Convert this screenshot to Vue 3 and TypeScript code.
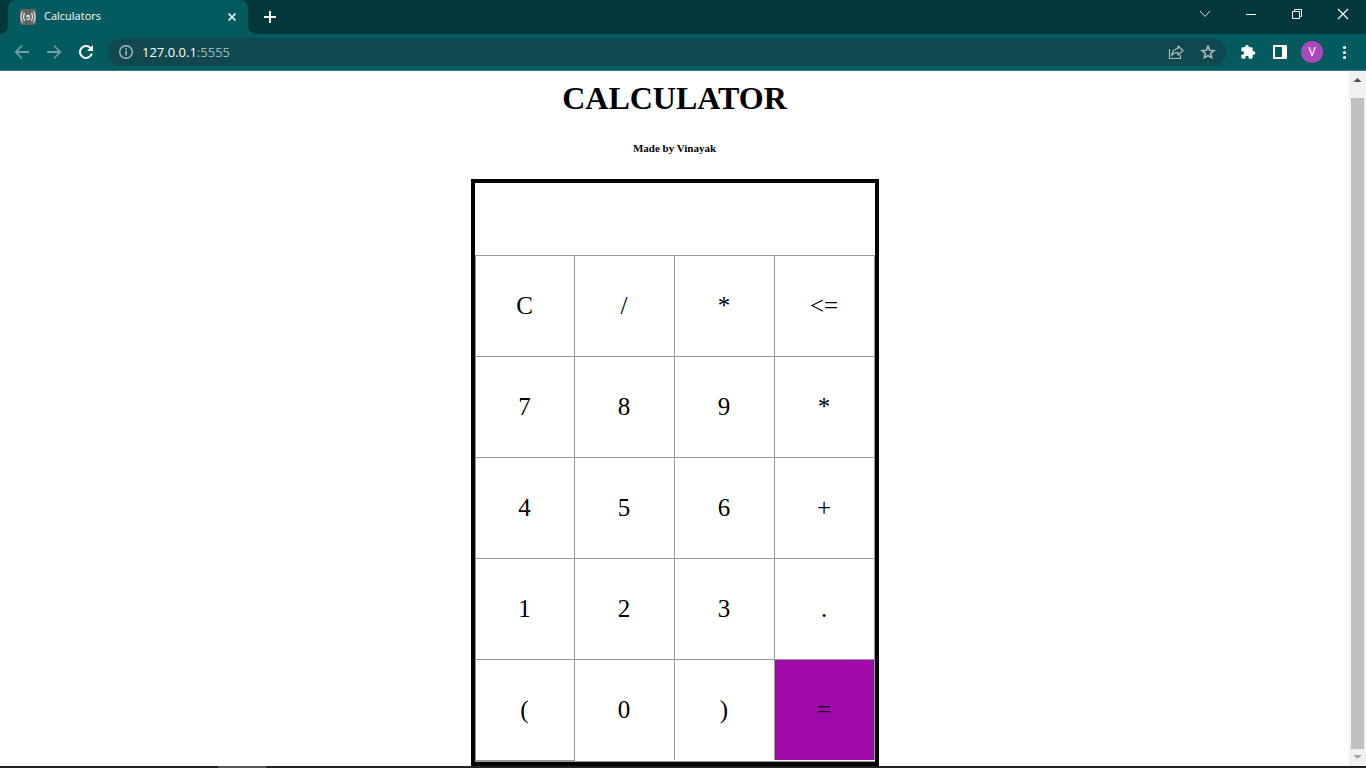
<script setup lang="ts">
import { ref } from 'vue'

interface Key {
  id: string
  label: string
  kind?: 'equals' | 'open'
}

const keys: Key[] = [
  { id: 'clear', label: 'C' },
  { id: 'divide', label: '/' },
  { id: 'times', label: '*' },
  { id: 'back', label: '<=' },
  { id: '7', label: '7' },
  { id: '8', label: '8' },
  { id: '9', label: '9' },
  { id: 'times-side', label: '*' },
  { id: '4', label: '4' },
  { id: '5', label: '5' },
  { id: '6', label: '6' },
  { id: 'plus', label: '+' },
  { id: '1', label: '1' },
  { id: '2', label: '2' },
  { id: '3', label: '3' },
  { id: 'point', label: '.' },
  { id: 'open', label: '(', kind: 'open' },
  { id: '0', label: '0' },
  { id: 'close', label: ')' },
  { id: 'equals', label: '=', kind: 'equals' },
]

const expression = ref('')
const address = ref('127.0.0.1:5555')

// Recursive descent over + - * / and parentheses.
function evaluate(source: string): number {
  const tokens = source.match(/\d*\.?\d+|[-+*/()]/g) ?? []
  let at = 0
  function factor(): number {
    const token = tokens[at++]
    if (token === '-') return -factor()
    if (token === '(') {
      const inner = sum()
      at++
      return inner
    }
    return Number(token)
  }
  function product(): number {
    let value = factor()
    while (tokens[at] === '*' || tokens[at] === '/') {
      value = tokens[at++] === '*' ? value * factor() : value / factor()
    }
    return value
  }
  function sum(): number {
    let value = product()
    while (tokens[at] === '+' || tokens[at] === '-') {
      value = tokens[at++] === '+' ? value + product() : value - product()
    }
    return value
  }
  return sum()
}

function press(key: Key) {
  if (key.id === 'clear') expression.value = ''
  else if (key.id === 'back') expression.value = expression.value.slice(0, -1)
  else if (key.id === 'equals') expression.value = expression.value ? String(evaluate(expression.value)) : ''
  else expression.value += key.label
}
</script>

<template>
  <div class="window">
    <header class="tabstrip">
      <div class="tab">
        <svg class="favicon" viewBox="0 0 16 16" aria-hidden="true">
          <rect width="16" height="16" rx="2" fill="#666" />
          <g fill="none" stroke="#e8e8e8" stroke-width="1.2">
            <path d="M2.600 2.500C.4 5.500.4 10.500 2.600 13.500M13.400 2.500c2.200 3 2.200 8 0 11" />
            <path d="M4.700 4.200C3.200 6.200 3.200 9.800 4.700 11.800M11.300 4.200c1.500 2 1.500 5.600 0 7.600" />
          </g>
          <text x="8" y="11" text-anchor="middle" font-family="Roboto, sans-serif" font-size="8" font-weight="500" fill="#fff">5</text>
        </svg>
        <span class="tab-title">Calculators</span>
        <button class="plain tab-close" aria-label="Close tab">
          <svg width="10" height="10" viewBox="0 0 10 10"><path d="M1.500 1.500l7 7m0-7l-7 7" stroke="#fff" stroke-width="1.600" /></svg>
        </button>
      </div>
      <button class="plain new-tab" aria-label="New tab">
        <svg width="12" height="12" viewBox="0 0 12 12"><path d="M6 0v12M0 6h12" stroke="#fff" stroke-width="2" /></svg>
      </button>
      <div class="window-controls">
        <button class="plain" aria-label="Search tabs">
          <svg width="12" height="12" viewBox="0 0 12 12"><path d="M1 3l5 5.500L11 3" fill="none" stroke="#d5dfe0" /></svg>
        </button>
        <button class="plain" aria-label="Minimize">
          <svg width="12" height="12" viewBox="0 0 12 12"><path d="M1 6.500h10" stroke="#fff" /></svg>
        </button>
        <button class="plain" aria-label="Restore">
          <svg width="12" height="12" viewBox="0 0 12 12"><path d="M1.500 3.500h7v7h-7zM3.500 3.500v-2h7v7h-2" fill="none" stroke="#fff" /></svg>
        </button>
        <button class="plain" aria-label="Close">
          <svg width="12" height="12" viewBox="0 0 12 12"><path d="M1 1l10 10M11 1L1 11" stroke="#fff" stroke-width="1.200" /></svg>
        </button>
      </div>
    </header>

    <nav class="toolbar">
      <button class="plain tool" aria-label="Back">
        <svg width="16" height="16" viewBox="0 0 16 16"><path d="M15 8H2M8 1.500L1.800 8 8 14.500" fill="none" stroke="#6fa0a4" stroke-width="1.800" /></svg>
      </button>
      <button class="plain tool" aria-label="Forward">
        <svg width="16" height="16" viewBox="0 0 16 16"><path d="M1 8h13M8 1.500L14.200 8 8 14.500" fill="none" stroke="#6fa0a4" stroke-width="1.800" /></svg>
      </button>
      <button class="plain tool" aria-label="Reload">
        <svg width="16" height="16" viewBox="0 0 16 16"><path d="M13.800 9.500A6 6 0 1 1 12.500 4" fill="none" stroke="#fff" stroke-width="2" /><path d="M15 1v6H9z" fill="#fff" /></svg>
      </button>
      <form class="omnibox" @submit.prevent>
        <svg width="16" height="16" viewBox="0 0 16 16" aria-hidden="true"><circle cx="8" cy="8" r="6.300" fill="none" stroke="#a9bbbd" stroke-width="1.400" /><path d="M8 7v4.500M8 4.300v1.600" stroke="#a9bbbd" stroke-width="1.600" /></svg>
        <label class="address">
          <span class="address-text" aria-hidden="true">127.0.0.1<span class="port">:5555</span></span>
          <input v-model="address" class="address-input" type="text" aria-label="Address" />
        </label>
        <button type="button" class="plain tool" aria-label="Share">
          <svg width="16" height="16" viewBox="0 0 16 16"><path d="M1.500 5v9.500h11V11" fill="none" stroke="#b4b9ba" stroke-width="1.200" /><path d="M10 2l5 4.500-5 4.500V8.500C7 8.300 5 9.300 3.700 11.500 4.200 7.500 6.500 5 10 4.500z" fill="none" stroke="#b4b9ba" stroke-width="1.200" stroke-linejoin="round" /></svg>
        </button>
        <button type="button" class="plain tool" aria-label="Bookmark">
          <svg width="16" height="16" viewBox="0 0 16 16"><path d="M8 2.200l1.700 4 4.300.4-3.300 2.900 1 4.200L8 11.500l-3.700 2.200 1-4.200L2 6.600l4.300-.4z" fill="none" stroke="#b4b9ba" stroke-width="1.500" /></svg>
        </button>
      </form>
      <button class="plain tool" aria-label="Extensions">
        <svg width="16" height="16" viewBox="0 0 24 24"><path d="M20.500 11H19V7a2 2 0 0 0-2-2h-4V3.500a2.500 2.500 0 0 0-5 0V5H4a2 2 0 0 0-2 2v3.800h1.500a2.700 2.700 0 0 1 0 5.400H2V20a2 2 0 0 0 2 2h3.800v-1.500a2.700 2.700 0 0 1 5.400 0V22H17a2 2 0 0 0 2-2v-4h1.500a2.500 2.500 0 0 0 0-5z" fill="#fff" /></svg>
      </button>
      <button class="plain tool" aria-label="Side panel">
        <svg width="16" height="16" viewBox="0 0 16 16"><path d="M1 1h14v14H1zM3 3v10h7V3z" fill="#fff" fill-rule="evenodd" /></svg>
      </button>
      <button class="plain avatar" aria-label="Profile V">V</button>
      <button class="plain tool" aria-label="Menu">
        <svg width="16" height="16" viewBox="0 0 16 16"><g fill="#fff"><circle cx="8.500" cy="3.500" r="1.600" /><circle cx="8.500" cy="8.500" r="1.600" /><circle cx="8.500" cy="13.500" r="1.600" /></g></svg>
      </button>
    </nav>

    <div class="viewport">
      <main class="page">
        <h1>CALCULATOR</h1>
        <h6>Made by Vinayak</h6>
        <section class="calculator">
          <input v-model="expression" class="display" type="text" aria-label="Expression" />
          <div class="keys">
            <button v-for="key in keys" :key="key.id" class="key" :class="key.kind" @click="press(key)">{{ key.label }}</button>
          </div>
        </section>
      </main>
      <div class="scrollbar" aria-hidden="true">
        <svg width="17" height="17" viewBox="0 0 17 17"><path d="M4.500 11L8.500 7l4 4z" fill="#505050" /></svg>
        <div class="thumb"></div>
        <svg width="17" height="17" viewBox="0 0 17 17"><path d="M4.500 6l4 4 4-4z" fill="#a3a3a3" /></svg>
      </div>
    </div>
    <footer class="taskbar"><span class="task"></span></footer>
  </div>
</template>

<style>
body {
  margin: 0;
  background: #fff;
}
</style>

<style scoped>
.window {
  display: flex;
  flex-direction: column;
  min-height: 100vh;
  font-family: "Open Sans", "Noto Sans", sans-serif;
}
.plain {
  display: flex;
  align-items: center;
  justify-content: center;
  padding: 0;
  border: 0;
  background: none;
}
svg {
  display: block;
  flex: none;
}
.tabstrip {
  display: flex;
  height: 34px;
  padding-left: 8px;
  background: #02383c;
}
.tab {
  position: relative;
  display: flex;
  align-items: center;
  box-sizing: border-box;
  width: 240px;
  padding: 0 8px 0 12px;
  border-radius: 8px 8px 0 0;
  background: #035b60;
  color: #fff;
}
.tab::before,
.tab::after {
  content: "";
  position: absolute;
  bottom: 0;
  width: 8px;
  height: 8px;
}
.tab::before {
  right: 100%;
  background: radial-gradient(circle at 0 0, #02383c 8px, #035b60 8px);
}
.tab::after {
  left: 100%;
  background: radial-gradient(circle at 100% 0, #02383c 8px, #035b60 8px);
}
.favicon {
  width: 16px;
  height: 16px;
}
.tab-title {
  flex: 1;
  margin-left: 8px;
  padding-bottom: 2px;
  font-size: 11px;
  line-height: 16px;
}
.tab-close {
  width: 16px;
  height: 16px;
}
.new-tab {
  width: 28px;
  margin-left: 8px;
}
.window-controls {
  display: flex;
  margin-left: auto;
  padding-bottom: 6px;
}
.window-controls .plain {
  width: 46px;
}
.toolbar {
  display: flex;
  align-items: center;
  gap: 16px;
  height: 36px;
  padding: 0 14px;
  border-bottom: 1px solid #3b7f84;
  background: #035b60;
}
.tool {
  flex: none;
  width: 16px;
  height: 28px;
}
.omnibox {
  display: flex;
  flex: 1;
  align-items: center;
  gap: 16px;
  height: 28px;
  margin-left: -2px;
  margin-right: -2px;
  padding: 0 10px;
  border-radius: 14px;
  background: #0f494f;
}
.address {
  position: relative;
  flex: 1;
  margin-left: -8px;
  font-size: 13px;
  line-height: 20px;
  color: #fff;
}
.port {
  color: #9fb6b9;
}
.address-input {
  position: absolute;
  inset: 0;
  width: 100%;
  padding: 0;
  border: 0;
  outline: 0;
  background: none;
  font: inherit;
  color: transparent;
}
.avatar {
  flex: none;
  width: 22px;
  height: 22px;
  margin: 0 -3px;
  border-radius: 50%;
  background: #ab47bc;
  font-family: Roboto, sans-serif;
  font-size: 12px;
  color: #fff;
}
.viewport {
  display: flex;
  flex: 1;
}
.page {
  display: flex;
  flex: 1;
  flex-direction: column;
  align-items: center;
  padding-top: 9px;
  font-family: "Liberation Serif", serif;
  color: #000;
}
h1 {
  margin: 0;
  font-size: 32px;
  line-height: 37px;
}
h6 {
  margin: 25px 0;
  font-size: 11px;
  line-height: 12px;
}
.calculator {
  width: 400px;
  border: 4px solid #000;
}
.display {
  display: block;
  box-sizing: border-box;
  width: 100%;
  height: 72px;
  padding: 0 10px;
  border: 0;
  outline: 0;
  background: #fff;
  font-family: "Liberation Serif", serif;
  font-size: 25px;
  text-align: right;
}
.keys {
  display: grid;
  grid-template-columns: 99px repeat(3, 1fr);
  grid-auto-rows: 101px;
  padding-bottom: 1px;
  border-left: 1px solid #999;
  border-bottom: 1px solid #999;
}
.key {
  padding: 0;
  border: 0;
  border-top: 1px solid #999;
  border-right: 1px solid #999;
  border-radius: 0;
  background: #fff;
  font-family: "Liberation Serif", serif;
  font-size: 25px;
  color: #000;
}
.open {
  box-shadow: 0 1px #999;
}
.equals {
  background: #a00aad;
}
.scrollbar {
  display: flex;
  flex-direction: column;
  width: 17px;
  background: #f1f1f1;
}
.scrollbar svg:first-child {
  margin-bottom: 10px;
}
.thumb {
  flex: 1;
  width: 13px;
  margin: 0 2px;
  background: #c1c1c1;
}
.taskbar {
  height: 2px;
  padding-left: 218px;
  background: #222226;
}
.task {
  display: block;
  width: 48px;
  height: 2px;
  background: #58585a;
}
</style>
